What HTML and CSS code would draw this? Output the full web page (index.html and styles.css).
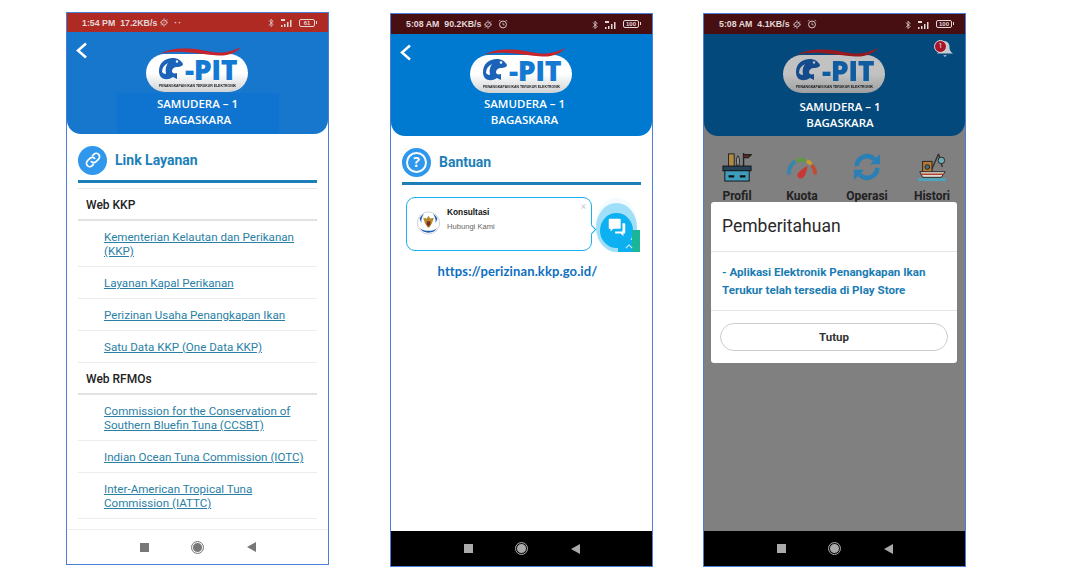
FILE: index.html
```html
<!DOCTYPE html>
<html lang="id">
<head>
<meta charset="utf-8">
<title>E-PIT</title>
<link rel="stylesheet" href="styles.css">
</head>
<body>
<svg class="defs" width="0" height="0" aria-hidden="true">
  <defs>
    <linearGradient id="pill" x1="0" y1="0" x2="0" y2="1">
      <stop offset="0" stop-color="#ffffff"/><stop offset=".5" stop-color="#ffffff"/><stop offset="1" stop-color="#d0d2d4"/>
    </linearGradient>
    <g id="logo-art">
      <rect x="0" y="8" width="102" height="38" rx="19" fill="url(#pill)"/>
      <path d="M14 8C20 4 30 2 42 2.500C56 3 66 7 76 6.500C84 6 90 3.500 95 1C90 7 82 10 72 9.500C60 9 50 6.500 38 6C28 5.500 20 6 14 8Z" fill="#c4242c"/>
      <path d="M13 25C13 17 19 12 27 12C31 12 35 14 37 18C37 20 34 21 31 21C28 21 26 23 26 25C26 27 28 28 31 27L31 33L27 31C24 33 21 33.500 19 33C15 33 13 29 13 25Z" fill="#1a63b8"/>
      <path d="M16 26C16 22 18 19 22 17C20 20 19 23 20 28C18 28 17 27 16 26Z" fill="#fff"/>
      <circle cx="31" cy="15.500" r="1.200" fill="#fff"/>
    </g>
    <g id="bt"><path d="M1 3L6 8L3.500 10.500V1.500L6 4L1 9" fill="none" stroke="currentColor" stroke-width="1"/></g>
    <g id="signal"><rect x="0" y="7" width="1.500" height="2"/><rect x="3" y="6" width="1.500" height="3"/><rect x="6" y="4" width="1.500" height="5"/><rect x="9" y="2" width="1.500" height="7"/><rect x="0" y="1" width="4" height="2"/></g>
    <g id="gear"><circle cx="5" cy="5" r="3.200" fill="none" stroke="currentColor"/><path d="M1 9L9 1M4 .5H6M.5 4V6M9.500 4V6M4 9.500H6" stroke="currentColor" stroke-width=".8"/></g>
    <g id="clock"><circle cx="5.500" cy="6" r="3.800" fill="none" stroke="currentColor"/><path d="M5.500 4V6.300H7.200M1 2.500L2.500 1M10 2.500L8.500 1" fill="none" stroke="currentColor" stroke-width=".8"/></g>
  </defs>
</svg>

<main class="gallery">

  <section class="phone phone-links">
    <div class="status status-red">
      <span class="status-text">1:54 PM&nbsp; 17.2KB/s</span>
      <svg class="st-ic" viewBox="0 0 10 10"><use href="#gear"/></svg>
      <span class="status-dots">··</span>
      <span class="status-fill"></span>
      <svg class="st-ic" viewBox="0 0 7 11"><use href="#bt"/></svg>
      <svg class="st-sig" viewBox="0 0 11 9" fill="currentColor"><use href="#signal"/></svg>
      <span class="battery">61</span>
    </div>
    <header class="app-head head-light">
      <svg class="back" viewBox="0 0 11 17"><path d="M10 1.500L2 8.500L10 15.500" fill="none" stroke="#fff" stroke-width="2.500"/></svg>
      <div class="logo">
        <svg class="logo-svg" viewBox="0 0 103 48"><use href="#logo-art"/></svg>
        <span class="logo-word">-PIT</span>
        <span class="logo-sub">PENANGKAPAN IKAN TERUKUR ELEKTRONIK</span>
      </div>
      <div class="ship-name ship-panel"><span>SAMUDERA – 1</span><span>BAGASKARA</span></div>
    </header>
    <div class="page page-scroll">
      <div class="title-row">
        <span class="round-ic">
          <svg viewBox="0 0 24 24" width="20" height="20" fill="none" stroke="#fff" stroke-width="2" stroke-linecap="round"><path d="M10 14a4 4 0 0 0 5.700 0l3-3a4 4 0 0 0-5.700-5.700l-1.500 1.500"/><path d="M14 10a4 4 0 0 0-5.700 0l-3 3a4 4 0 0 0 5.700 5.700l1.500-1.500"/></svg>
        </span>
        <h1 class="page-title">Link Layanan</h1>
      </div>
      <ul class="link-list">
        <li class="group">Web KKP</li>
        <li class="link"><a>Kementerian Kelautan dan Perikanan (KKP)</a></li>
        <li class="link"><a>Layanan Kapal Perikanan</a></li>
        <li class="link"><a>Perizinan Usaha Penangkapan Ikan</a></li>
        <li class="link"><a>Satu Data KKP (One Data KKP)</a></li>
        <li class="group">Web RFMOs</li>
        <li class="link"><a>Commission for the Conservation of Southern Bluefin Tuna (CCSBT)</a></li>
        <li class="link"><a>Indian Ocean Tuna Commission (IOTC)</a></li>
        <li class="link"><a>Inter-American Tropical Tuna Commission (IATTC)</a></li>
      </ul>
    </div>
    <nav class="softkeys keys-light">
      <span class="key-square"></span><span class="key-circle"></span><span class="key-back"></span>
    </nav>
  </section>

  <section class="phone phone-help">
    <div class="status status-dark">
      <span class="status-text">5:08 AM&nbsp; 90.2KB/s</span>
      <svg class="st-ic" viewBox="0 0 10 10"><use href="#gear"/></svg>
      <svg class="st-ic st-clock" viewBox="0 0 11 11"><use href="#clock"/></svg>
      <span class="status-fill"></span>
      <svg class="st-ic" viewBox="0 0 7 11"><use href="#bt"/></svg>
      <svg class="st-sig" viewBox="0 0 11 9" fill="currentColor"><use href="#signal"/></svg>
      <span class="battery">100</span>
    </div>
    <header class="app-head head-blue">
      <svg class="back" viewBox="0 0 11 17"><path d="M10 1.500L2 8.500L10 15.500" fill="none" stroke="#fff" stroke-width="2.500"/></svg>
      <div class="logo">
        <svg class="logo-svg" viewBox="0 0 103 48"><use href="#logo-art"/></svg>
        <span class="logo-word">-PIT</span>
        <span class="logo-sub">PENANGKAPAN IKAN TERUKUR ELEKTRONIK</span>
      </div>
      <div class="ship-name name-help"><span>SAMUDERA – 1</span><span>BAGASKARA</span></div>
    </header>
    <div class="page">
      <div class="title-row">
        <span class="round-ic"><span class="ring">?</span></span>
        <h1 class="page-title">Bantuan</h1>
      </div>
      <div class="chat-wrap">
        <div class="chat-card">
          <svg class="emblem" viewBox="0 0 28 28">
            <circle cx="14" cy="14" r="12.500" fill="#fff" stroke="#c9ced6"/>
            <path d="M4 19A11.500 11.500 0 0 0 24 19C21 24 7 24 4 19Z" fill="#1c5fb0"/>
            <path d="M4 9A11 11 0 0 1 9 4C6 8 6 10 6 14Z" fill="#1c5fb0"/>
            <path d="M24 9A11 11 0 0 0 19 4C22 8 22 10 22 14Z" fill="#1c5fb0"/>
            <path d="M14 6L16 9L20 8L18 14L15 19H13L10 14L8 8L12 9Z" fill="#b58a2c"/>
            <path d="M12 12H16V16L14 18L12 16Z" fill="#7a2b22"/>
          </svg>
          <div class="chat-text"><strong>Konsultasi</strong><span>Hubungi Kami</span></div>
          <span class="chat-x">×</span>
        </div>
        <div class="chat-ring">
          <div class="chat-button">
            <svg viewBox="0 0 24 24" width="22" height="22" fill="#fff"><path d="M4 3H15Q16 3 16 4V13Q16 14 15 14H8L5 17V14H4Q3 14 3 13V4Q3 3 4 3Z"/><path d="M18 8H20Q21 8 21 9V18Q21 19 20 19H19V22L16 19H10V17H17Q18 17 18 16Z"/></svg>
          </div>
        </div>
        <span class="chat-tab"><svg viewBox="0 0 10 6" width="8" height="5"><path d="M1 5L5 1L9 5" fill="none" stroke="#cfeef5" stroke-width="1.300"/></svg></span>
      </div>
      <p class="site-url">https://perizinan.kkp.go.id/</p>
    </div>
    <nav class="softkeys keys-dark">
      <span class="key-square"></span><span class="key-circle"></span><span class="key-back"></span>
    </nav>
  </section>

  <section class="phone phone-home">
    <div class="status status-dark">
      <span class="status-text">5:08 AM&nbsp; 4.1KB/s</span>
      <svg class="st-ic" viewBox="0 0 10 10"><use href="#gear"/></svg>
      <svg class="st-ic st-clock" viewBox="0 0 11 11"><use href="#clock"/></svg>
      <span class="status-fill"></span>
      <svg class="st-ic" viewBox="0 0 7 11"><use href="#bt"/></svg>
      <svg class="st-sig" viewBox="0 0 11 9" fill="currentColor"><use href="#signal"/></svg>
      <span class="battery">100</span>
    </div>
    <div class="home-body">
      <header class="app-head head-home">
        <div class="logo logo-dim">
          <svg class="logo-svg" viewBox="0 0 103 48"><use href="#logo-art"/></svg>
          <span class="logo-word">-PIT</span>
          <span class="logo-sub">PENANGKAPAN IKAN TERUKUR ELEKTRONIK</span>
        </div>
        <div class="ship-name name-home"><span>SAMUDERA – 1</span><span>BAGASKARA</span></div>
        <div class="bell">
          <svg viewBox="0 0 20 20" width="20" height="18"><path d="M10 1C6 2 5 5 5 8C5 11 4 13 1 15H19C16 13 15 11 15 8C15 5 14 2 10 1Z" fill="#c3ccd2"/><path d="M8 17H12L10 19Z" fill="#c3ccd2"/></svg>
          <span class="bell-badge">1</span>
        </div>
      </header>
      <div class="menu-row">
        <div class="menu-item">
          <svg viewBox="0 0 32 32" width="30" height="30"><rect x="7" y="2" width="6" height="14" fill="#b08a44" stroke="#222"/><path d="M16 15C15 10 15 6 17 4C19 6 19 10 18 15Z" fill="#9a9a9a" stroke="#222"/><path d="M23 15V1M23 3H31L28 6H23" fill="#7d2a22" stroke="#222" stroke-width="1.500"/><rect x="1" y="15" width="30" height="5" fill="#27435a" stroke="#111"/><rect x="3" y="20" width="26" height="11" fill="#3f9cba" stroke="#111"/><path d="M7 26H13M19 26H25" stroke="#111" stroke-width="2.500"/></svg>
          <span>Profil</span>
        </div>
        <div class="menu-item">
          <svg viewBox="0 0 32 32" width="30" height="30"><path d="M2 24A15 15 0 0 1 9 10" fill="none" stroke="#3486ad" stroke-width="4"/><path d="M10 9.500A15 15 0 0 1 20 9" fill="none" stroke="#5f9a42" stroke-width="4"/><path d="M21 9.500A15 15 0 0 1 26 13" fill="none" stroke="#c69c2c" stroke-width="4"/><path d="M26.500 14A15 15 0 0 1 30 24" fill="none" stroke="#c24a36" stroke-width="4"/><path d="M11 25C11 22 16 18 22 15C21 21 19 27 16 28C13 29 11 27 11 25Z" fill="#c93836"/></svg>
          <span>Kuota</span>
        </div>
        <div class="menu-item">
          <svg viewBox="0 0 32 32" width="30" height="30" fill="none" stroke="#2a7fb5" stroke-width="5"><path d="M5 15A11 11 0 0 1 24 8"/><path d="M27 17A11 11 0 0 1 8 24"/><path d="M19 13H30V2Z" fill="#2a7fb5" stroke="none"/><path d="M13 19H2V30Z" fill="#2a7fb5" stroke="none"/></svg>
          <span>Operasi</span>
        </div>
        <div class="menu-item">
          <svg viewBox="0 0 32 32" width="30" height="30"><path d="M15 20L23 2M23 2L27 16" fill="none" stroke="#333" stroke-width="1.500"/><circle cx="26" cy="9" r="3.500" fill="#6faab6" stroke="#222"/><rect x="6" y="10" width="10" height="12" fill="#b9792f" stroke="#222"/><circle cx="11" cy="16" r="2.500" fill="#44708c" stroke="#222"/><path d="M3 21H30L26 27H6Z" fill="#dedcd0" stroke="#222"/><path d="M4 23H29L28 24.500H5Z" fill="#b53f30"/><path d="M1 28H31V31H1Z" fill="#4ea4bd"/></svg>
          <span>Histori</span>
        </div>
      </div>
      <div class="dialog">
        <h2 class="dialog-title">Pemberitahuan</h2>
        <p class="dialog-text">- Aplikasi Elektronik Penangkapan Ikan Terukur telah tersedia di Play Store</p>
        <div class="dialog-foot"><button class="dialog-btn">Tutup</button></div>
      </div>
    </div>
    <nav class="softkeys keys-dark">
      <span class="key-square"></span><span class="key-circle"></span><span class="key-back"></span>
    </nav>
  </section>

</main>
</body>
</html>
```
FILE: styles.css
```css
* { box-sizing: border-box; }
html, body { margin: 0; padding: 0; background: #fff; }
body { width: 1088px; height: 586px; overflow: hidden; font-family: Roboto, "Liberation Sans", sans-serif; }
.defs { display: block; height: 0; }
.gallery { display: flex; align-items: flex-start; padding: 13px 0 0 66px; }

.phone { width: 263px; height: 554px; border: 1px solid #4a7ed8; background: #fff; display: flex; flex-direction: column; overflow: hidden; flex: none; position: relative; }
.phone-links { margin-top: -1px; height: 553px; }
.phone-help { margin-left: 61px; }
.phone-home { margin-left: 50px; }

.status { height: 20px; flex: none; display: flex; align-items: center; padding: 0 12px 0 15px; gap: 3px; color: #e2d8d8; font-size: 8.800px; font-weight: 700; font-family: "Liberation Sans", sans-serif; }
.status-red { background: #ae2a23; height: 19px; }
.status-dark { background: #470f12; }
.status-fill { flex: 1; }
.status-dots { margin-left: 3px; letter-spacing: 1px; }
.st-ic { width: 8px; height: 9px; color: #e2d8d8; }
.st-clock { width: 10px; height: 10px; margin-left: 3px; }
.st-sig { width: 13px; height: 9px; margin: 0 3px 0 2px; }
.battery { width: 16px; height: 8px; border: 1px solid #e2d8d8; border-radius: 2px; font-size: 6px; line-height: 6px; text-align: center; position: relative; margin-right: 1px; }
.battery::after { content: ""; position: absolute; right: -3px; top: 1px; width: 1px; height: 3px; background: #e2d8d8; }

.app-head { height: 102px; flex: none; border-radius: 0 0 14px 14px; position: relative; display: flex; flex-direction: column; align-items: center; padding-top: 13px; }
.head-light { background: #1777cc; padding-top: 14px; }
.head-blue { background: #0079d0; }
.head-home { background: #04497c; }
.back { position: absolute; left: 9px; top: 10px; width: 11px; height: 17px; }

.logo { width: 103px; height: 48px; position: relative; flex: none; }
.logo-dim { filter: brightness(.76); }
.logo-svg { width: 103px; height: 48px; display: block; }
.logo-word { position: absolute; left: 39px; top: 11px; font: 800 28.500px/24px "Open Sans", sans-serif; color: #1479d2; letter-spacing: -.4px; }
.logo-sub { position: absolute; left: 0; right: 0; top: 36.500px; font: 700 4px/5px "Liberation Sans", sans-serif; color: #222; white-space: nowrap; text-align: center; transform: scaleX(.86); }

.ship-name { width: 162px; display: flex; flex-direction: column; align-items: center; color: #fff; font: 600 11.500px/15.500px "Open Sans", sans-serif; padding-top: 2px; flex: 1; }
.ship-panel { background: #0f74cf; margin-top: -1px; padding-top: 3px; }
.name-help { padding: 1px 0 0 6px; }
.name-home { padding: 4px 0 0 11px; }

.page { flex: 1; padding: 0 11px; min-height: 0; overflow: hidden; }
.title-row { height: 49px; display: flex; align-items: center; gap: 8px; border-bottom: 3px solid #1c7fb8; padding-top: 6px; }
.round-ic { width: 29px; height: 29px; border-radius: 50%; background: #2f97ec; display: flex; align-items: center; justify-content: center; flex: none; }
.ring { width: 21px; height: 21px; border: 2.500px solid #fff; border-radius: 50%; color: #fff; font: 700 14px/16px "Open Sans", sans-serif; text-align: center; }
.page-title { margin: 0; font: 700 14px/20px Roboto, sans-serif; color: #1c7fb8; }

.link-list { list-style: none; margin: 5px 0 0; padding: 0; border-top: 1px solid #e8e8e8; }
.group { height: 32px; border-bottom: 2px solid #e2e2e2; font-size: 12px; font-weight: 500; color: #222; display: flex; align-items: center; padding: 2px 0 0 8px; }
.link { padding: 9px 8px 8px 26px; border-bottom: 1px solid #ececec; font-size: 11.600px; line-height: 14px; color: #2a7fa5; }
.link a { text-decoration: underline; }

.softkeys { height: 35px; flex: none; display: flex; align-items: center; justify-content: center; gap: 43.500px; }
.keys-light { background: #fff; border-top: 1px solid #eeeeee; }
.keys-dark { background: #000; }
.key-square { width: 9px; height: 9px; background: #777; }
.key-circle { width: 11px; height: 11px; border-radius: 50%; background: #777; border: 1.500px solid #fff; outline: 1px solid #777; box-sizing: border-box; }
.key-back { width: 0; height: 0; border-style: solid; border-width: 5px 9px 5px 0; border-color: transparent #777 transparent transparent; }
.keys-dark .key-square { background: #aaa; }
.keys-dark .key-circle { background: #aaa; border-color: #000; outline-color: #aaa; }
.keys-dark .key-back { border-right-color: #aaa; }

.chat-wrap { position: relative; height: 59px; margin-top: 12px; }
.chat-card { position: absolute; left: 4px; top: 0; width: 186px; height: 54px; border: 1px solid #1ab1ee; border-radius: 9px; background: #fff; display: flex; align-items: flex-start; padding: 12px 0 0 9px; gap: 6px; }
.chat-card::after { content: ""; position: absolute; right: -4px; top: 28px; width: 6px; height: 6px; background: #fff; border-top: 1px solid #1ab1ee; border-right: 1px solid #1ab1ee; transform: rotate(45deg); }
.emblem { width: 25px; height: 26px; flex: none; }
.chat-text { display: flex; flex-direction: column; gap: 2.500px; margin-top: -3px; font: 7.600px/11px "Liberation Sans", sans-serif; color: #666; }
.chat-text strong { color: #111; font-weight: 700; font-size: 8.300px; }
.chat-x { position: absolute; right: 5px; top: 3px; color: #ccd; font-size: 10px; }
.chat-ring { position: absolute; left: 194px; top: 6px; width: 41px; height: 49px; border-radius: 50%; background: #9fdff7; box-shadow: 0 -5px 0 #f3fbfe; }
.chat-button { position: absolute; left: 4px; top: 10px; width: 33px; height: 35px; padding-bottom: 7px; border-radius: 50%; background: #0db0f1; display: flex; align-items: center; justify-content: center; }
.chat-tab { position: absolute; left: 216px; top: 43px; width: 22px; height: 12px; background: linear-gradient(90deg, #0db0ee 62%, #1bb69a 64%); display: flex; align-items: center; justify-content: center; }
.chat-tab::before { content: ""; position: absolute; left: 14px; top: -10px; width: 8px; height: 10px; background: #1bb69a; }
.site-url { margin: 6px 8px 0 0; text-align: center; font: 700 13px/18px Lato, sans-serif; color: #0d6fc0; letter-spacing: .12px; }

.home-body { flex: 1; min-height: 0; background: #808080; position: relative; }
.bell { position: absolute; right: 10px; top: 6px; width: 20px; height: 18px; }
.bell-badge { position: absolute; left: -1px; top: 0; width: 13px; height: 13px; border-radius: 50%; background: #a8142a; border: 1px solid #ddd; color: #eee; font-size: 7px; line-height: 11px; text-align: center; }
.menu-row { display: grid; grid-template-columns: repeat(4, 65px); justify-content: center; padding-top: 16px; }
.menu-item { display: flex; flex-direction: column; align-items: center; gap: 8px; font-size: 12px; line-height: 12px; font-weight: 700; color: #222; }
.dialog { position: absolute; left: 7px; top: 168px; width: 246px; height: 161px; background: #fff; border-radius: 3px; display: flex; flex-direction: column; }
.dialog-title { margin: 0; height: 50px; flex: none; border-bottom: 1px solid #e6e6e6; padding: 12px 11px 0; font-size: 17.500px; line-height: 24px; font-weight: 400; color: #2a2a2a; }
.dialog-text { margin: 0; flex: none; height: 59px; border-bottom: 1px solid #e6e6e6; padding: 11px 11px 0; font-size: 11.600px; line-height: 18px; font-weight: 700; color: #1a7cb4; }
.dialog-foot { flex: 1; padding: 12px 9px 0; }
.dialog-btn { width: 228px; height: 28px; border: 1px solid #ccc; border-radius: 14px; background: #fff; font: 700 11.500px Roboto, sans-serif; color: #333; padding: 0; }
```
